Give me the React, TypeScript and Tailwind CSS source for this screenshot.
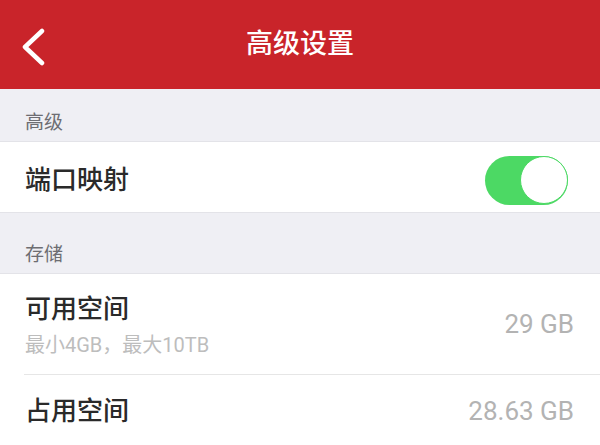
import React from "react";

export default function App() {
  const font = { fontFamily: 'Roboto, "Noto Sans CJK SC", sans-serif' };
  return (
    <div className="w-[600px] h-[445px] overflow-hidden bg-white" style={font}>
      <div className="relative h-[89px] bg-[#c9242a] flex items-center justify-center">
        <svg className="absolute left-[18px] top-[26px]" width="32" height="40" viewBox="0 0 32 40">
          <polyline points="24,5 7,21 24,37" fill="none" stroke="white" strokeWidth="4.5" strokeLinecap="round" strokeLinejoin="round" />
        </svg>
        <span className="text-white text-[27px] leading-none font-medium">高级设置</span>
      </div>
      <div className="h-[52px] bg-[#efeff4] flex items-center pt-[14px] px-[25px]">
        <span className="text-[19px] leading-none text-[#6d6d72]">高级</span>
      </div>
      <div className="h-[71px] flex items-center justify-between pl-[25px] pr-[32px] pt-[6px] border-t border-[#e3e3e8]">
        <span className="text-[26px] leading-none text-[#2a2a2a] font-medium">端口映射</span>
        <div className="w-[83px] h-[49px] rounded-full bg-[#4cd964] flex items-center justify-end">
          <div className="w-[48px] h-[48px] rounded-full bg-white border border-[#4cd964]" />
        </div>
      </div>
      <div className="h-[61px] bg-[#efeff4] flex items-center pt-[22px] px-[25px] border-t border-[#e3e3e8]">
        <span className="text-[19px] leading-none text-[#6d6d72]">存储</span>
      </div>
      <div className="border-t border-[#e3e3e8]">
        <div className="h-[100px] flex items-center justify-between pl-[25px] pr-[26px]">
          <div className="flex flex-col pt-[2px]">
            <span className="text-[26px] leading-none text-[#2a2a2a] font-medium">可用空间</span>
            <span className="text-[20px] leading-none text-[#bdbdbd] mt-[13px]">最小4GB，最大10TB</span>
          </div>
          <span className="text-[26px] leading-none text-[#b3b3b3]">29 GB</span>
        </div>
        <div className="ml-[24px] h-px bg-[#e6e6e6]" />
        <div className="h-[71px] flex items-center justify-between pl-[25px] pr-[26px]">
          <span className="text-[26px] leading-none text-[#2a2a2a] font-medium">占用空间</span>
          <span className="text-[26px] leading-none text-[#b3b3b3]">28.63 GB</span>
        </div>
      </div>
    </div>
  );
}
